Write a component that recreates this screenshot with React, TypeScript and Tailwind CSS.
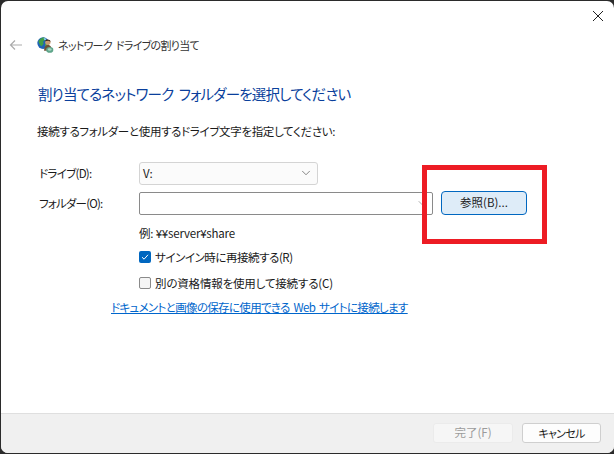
import { ChevronDown } from 'lucide-react'

function NetworkIcon() {
  return (
    <svg width="17" height="18" viewBox="0 0 18 18" className="shrink-0">
      <circle cx="6.5" cy="7" r="6.2" fill="#1f63b8" />
      <path d="M1.5 5 C3 2 6 0.5 8 1.2 L9 3.5 L6.5 5 L7 8 L4.5 10.5 L2.5 8 Z" fill="#3f9e46" />
      <path d="M7 1.5 L10 2.5 L9 4 L7.5 3.5 Z" fill="#8fd0ee" />
      <path d="M8.5 8 L11 7 L11 10 L9 12 Z" fill="#4faa4a" />
      <circle cx="11.5" cy="6.2" r="2.8" fill="#c99d70" />
      <path d="M8.5 5 C9 2.5 14 2.5 14.5 5.5 L12 4.5 Z" fill="#3f2c1c" />
      <path d="M7.5 15 C7.5 10.5 9.5 9 11.5 9 C14 9 15.5 10.5 15.5 15 Z" fill="#6f5236" />
      <ellipse cx="13.5" cy="14.2" rx="3.8" ry="3" fill="#5fa58a" />
      <ellipse cx="13.5" cy="13.7" rx="2" ry="1.3" fill="#a6d6c2" />
    </svg>
  )
}

export default function App() {
  return (
    <div className="relative flex h-[454px] w-[614px] flex-col overflow-hidden bg-[#2b2b2b] font-['Noto_Sans_CJK_JP','Noto_Sans',sans-serif] text-[11.5px] leading-[16px] text-[#1a1a1a] [font-feature-settings:'palt']">
      <div className="mt-px ml-px flex h-[452px] w-[613px] flex-col overflow-hidden rounded-[7px] bg-white">
        <div className="flex h-[30px] shrink-0 items-center justify-end pr-[10px]">
          <svg width="12" height="12" viewBox="0 0 12 12" className="mt-[-1px]">
            <path d="M1 1 L11 11 M11 1 L1 11" stroke="#222" strokeWidth="1" fill="none" />
          </svg>
        </div>

        <div className="mt-px flex h-[26px] shrink-0 items-center pl-[8px]">
          <svg width="14" height="12" viewBox="0 0 14 12">
            <path d="M13 6 H1.5 M6 1.5 L1.5 6 L6 10.5" stroke="#ababab" strokeWidth="1.2" fill="none" />
          </svg>
          <div className="ml-[14px] flex items-center gap-[4px]">
            <NetworkIcon />
            <span className="text-[11px] tracking-[-0.7px] [word-spacing:2px] text-[#333]">ネットワーク ドライブの割り当て</span>
          </div>
        </div>

        <div className="flex min-h-0 flex-1 flex-col pl-[36px]">
          <h1 className="mt-[25px] ml-px text-[14.5px] leading-[22px] font-normal tracking-[-0.8px] [word-spacing:3px] text-[#0a3f9c]">割り当てるネットワーク フォルダーを選択してください</h1>
          <p className="mt-[18px] tracking-[-0.33px]">接続するフォルダーと使用するドライブ文字を指定してください:</p>

          <div className="mt-[22px] flex h-[24px] items-center">
            <span className="ml-[2px] w-[100px] tracking-[-0.7px]">ドライブ(D):</span>
            <div className="flex h-[23px] w-[179px] items-center justify-between rounded-[3px] border border-[#d4d4d4] bg-[#fbfbfb] pr-[4px] pl-[3px]">
              <span>V:</span>
              <ChevronDown size={14} strokeWidth={1.2} color="#555" />
            </div>
          </div>

          <div className="mt-[6px] flex items-center">
            <span className="ml-[2px] w-[100px] tracking-[-0.8px]">フォルダー(O):</span>
            <div className="flex h-[23px] w-[294px] items-center justify-end rounded-[2px] border border-[#8a8a8a] bg-white pr-[4px]">
              <ChevronDown size={12} strokeWidth={1.2} color="#777" />
            </div>
            <button className="ml-[8px] h-[24px] w-[86px] rounded-[4px] border border-[#0067c0] bg-[#deecf8] text-[11.5px] leading-none text-[#1a1a1a]">
              参照(B)...
            </button>
          </div>

          <div className="ml-[102px] flex flex-col">
            <p className="mt-[10px] tracking-[-0.2px]">例: ¥¥server¥share</p>
            <label className="mt-[8px] flex items-center gap-[4px] tracking-[-0.45px]">
              <span className="flex h-[12px] w-[12px] items-center justify-center rounded-[2px] bg-[#0067c0]">
                <svg width="8" height="8" viewBox="0 0 8 8">
                  <path d="M1 4.2 L3.1 6.2 L7 1.8" stroke="#fff" strokeWidth="1" fill="none" />
                </svg>
              </span>
              サインイン時に再接続する(R)
            </label>
            <label className="mt-[10px] flex items-center gap-[4px] tracking-[-0.17px]">
              <span className="h-[12px] w-[12px] rounded-[2px] border border-[#8a8a8a] bg-[#f5f5f5]" />
              別の資格情報を使用して接続する(C)
            </label>
          </div>

          <a className="mt-[8px] ml-[74px] w-fit tracking-[-0.67px] [word-spacing:2px] text-[#0066cc] underline">ドキュメントと画像の保存に使用できる Web サイトに接続します</a>
        </div>

        <div className="flex h-[40px] shrink-0 items-center justify-end gap-[9px] border-t border-[#dfdfdf] bg-[#f0f0f0] pr-[13px] pb-px">
          <button className="h-[20px] w-[80px] rounded-[3px] border border-[#ebebeb] bg-[#f6f6f6] text-[11.5px] leading-none text-[#9b9b9b]">完了(F)</button>
          <button className="h-[20px] w-[79px] rounded-[3px] border border-[#cfcfcf] bg-[#fdfdfd] text-[11px] leading-none tracking-[-0.7px] text-[#1a1a1a]">キャンセル</button>
        </div>
      </div>

      <div className="absolute top-[165px] left-[422px] h-[79px] w-[125px] border-[5px] border-[#ed1c24]" />
    </div>
  )
}
